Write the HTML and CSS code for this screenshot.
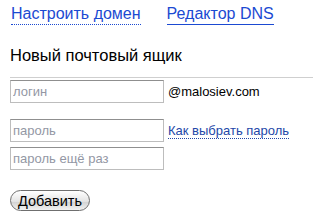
FILE: index.html
```html
<!DOCTYPE html>
<html lang="ru">

<head>
    <meta charset="UTF-8">
    <meta name="viewport" content="width=device-width, initial-scale=1.0">
    <title>Почта для домена</title>
    <link rel="stylesheet" href="styles.css">
</head>

<body>
    <div class="page">
        <div class="tabs">
            <a href="#" class="tab tab-current">Настроить домен</a>
            <a href="#" class="tab">Редактор DNS</a>
        </div>

        <h2 class="title">Новый почтовый ящик</h2>

        <form class="mailbox">
            <div class="row">
                <input type="text" class="field" placeholder="логин">
                <span class="domain">@malosiev.com</span>
            </div>
            <div class="row row-pass">
                <input type="password" class="field" placeholder="пароль">
                <a href="#" class="hint">Как выбрать пароль</a>
            </div>
            <div class="row row-repeat">
                <input type="password" class="field" placeholder="пароль ещё раз">
            </div>
            <button type="submit" class="add">Добавить</button>
        </form>
    </div>
</body>

</html>
```

FILE: styles.css
```css
body {
    margin: 0;
    font-family: "Liberation Sans", Arial, sans-serif;
    background-color: #fff;
    color: #000;
}

.page {
    padding-left: 10px;
}

.tabs {
    display: flex;
    gap: 26px;
    padding-top: 4px;
    padding-left: 1px;
    font-size: 16px;
    line-height: 20px;
    height: 20px;
}

.tab {
    color: #1b4ad2;
    text-decoration: none;
    border-bottom: 1px solid #1b4ad2;
    padding-bottom: 1px;
    align-self: flex-start;
    line-height: 18px;
    margin-top: 1px;
}

.tab-current {
    border-bottom-style: dotted;
}

.title {
    margin: 21px 0 0;
    padding-bottom: 12px;
    font-size: 16.5px;
    line-height: 20px;
    font-weight: normal;
    border-bottom: 1px solid #cfcfcf;
}

.mailbox {
    margin: 0;
    padding-top: 2px;
}

.row {
    display: flex;
    align-items: center;
    gap: 4px;
}

.row-pass {
    margin-top: 16px;
}

.row-repeat {
    margin-top: 5px;
}

.field {
    width: 154px;
    height: 23px;
    box-sizing: border-box;
    margin: 0;
    padding: 0 2px;
    border: 1px solid #bdbdbd;
    border-top-color: #8f8f8f;
    font-family: "Liberation Sans", Arial, sans-serif;
    font-size: 13px;
    color: #000;
}

.field::placeholder {
    color: #9397a4;
}

.domain {
    font-size: 13px;
}

.hint {
    font-size: 13px;
    color: #2347a8;
    text-decoration: none;
    border-bottom: 1px dotted #2347a8;
    line-height: 15px;
}

.add {
    display: block;
    margin-top: 20px;
    width: 80px;
    height: 21px;
    padding: 0;
    border: 1px solid #6f6f6f;
    border-radius: 11px;
    background: linear-gradient(#ffffff, #e4e4e4 55%, #d4d4d4 60%, #f2f2f2);
    font-family: "Liberation Sans", Arial, sans-serif;
    font-size: 14.5px;
    color: #000;
}
```
